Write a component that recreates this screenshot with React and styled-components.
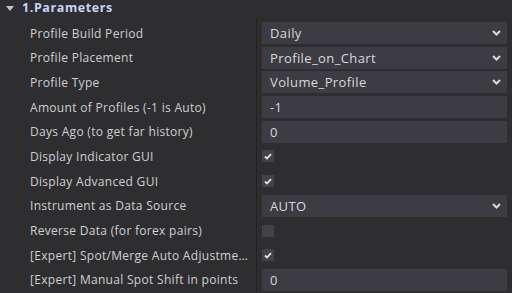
import { Fragment } from "react";
import styled, { createGlobalStyle } from "styled-components";

const Global = createGlobalStyle`
  html, body {
    margin: 0;
    padding: 0;
    background: #2e2e31;
  }
  body {
    font-family: "Open Sans", "Noto Sans", sans-serif;
    font-size: 12px;
    color: #d2d2d4;
  }
`;

const Panel = styled.div`
  width: 512px;
  height: 293px;
  overflow: hidden;
  background: #2e2e31;
`;

const Header = styled.div`
  height: 18px;
  display: flex;
  align-items: center;
  gap: 8px;
  padding-left: 6px;
  box-sizing: border-box;
`;

const Caret = styled.span`
  width: 0;
  height: 0;
  border-left: 4.5px solid transparent;
  border-right: 4.5px solid transparent;
  border-top: 5px solid #c4c4c6;
  margin-top: -2px;
`;

const Title = styled.span`
  font-weight: 700;
  font-size: 12.5px;
  letter-spacing: 0.6px;
  color: #c9d3f6;
  margin-top: -4px;
`;

const Grid = styled.div`
  display: grid;
  grid-template-columns: 256px 1px 250px;
  grid-auto-rows: 22px;
  row-gap: 2.7px;
  padding-top: 4px;
`;

const Divider = styled.div`
  grid-column: 2;
  grid-row: 1 / span 12;
  margin-top: -4px;
  margin-bottom: -20px;
  background: #222224;
`;

const Label = styled.div`
  grid-column: 1;
  display: flex;
  align-items: center;
  padding-left: 30px;
  padding-right: 8px;
  min-width: 0;
  color: #cfcfd1;
  letter-spacing: 0.3px;

  span {
    white-space: nowrap;
    overflow: hidden;
    text-overflow: ellipsis;
  }
`;

const Cell = styled.div`
  grid-column: 3;
  display: flex;
  align-items: center;
  padding-left: 5px;
`;

const Box = styled.div`
  width: 245px;
  height: 22px;
  box-sizing: border-box;
  background: #3d3c42;
  display: flex;
  align-items: center;
  justify-content: space-between;
  padding: 0 6px 0 8px;
  color: #d8d8da;
  font-size: 13px;
  letter-spacing: 0.4px;
`;

const Check = styled.div`
  width: 12px;
  height: 12px;
  background: #434247;
  display: flex;
  align-items: center;
  justify-content: center;
`;

const Chevron = () => (
  <svg width="9" height="6" viewBox="0 0 9 6">
    <path d="M1 1 L4.5 4.5 L8 1" fill="none" stroke="#d8d8da" strokeWidth="2.1" />
  </svg>
);

const Tick = () => (
  <svg width="8" height="7" viewBox="0 0 8 7">
    <path d="M1 3.5 L3 5.5 L7 1.2" fill="none" stroke="#e4e4e6" strokeWidth="1.8" />
  </svg>
);

const params = [
  { label: "Profile Build Period", type: "select", value: "Daily" },
  { label: "Profile Placement", type: "select", value: "Profile_on_Chart" },
  { label: "Profile Type", type: "select", value: "Volume_Profile" },
  { label: "Amount of Profiles (-1 is Auto)", type: "input", value: "-1" },
  { label: "Days Ago (to get far history)", type: "input", value: "0" },
  { label: "Display Indicator GUI", type: "check", value: true },
  { label: "Display Advanced GUI", type: "check", value: true },
  { label: "Instrument as Data Source", type: "select", value: "AUTO" },
  { label: "Reverse Data (for forex pairs)", type: "check", value: false },
  { label: "[Expert] Spot/Merge Auto Adjustment", type: "check", value: true },
  { label: "[Expert] Manual Spot Shift in points", type: "input", value: "0" },
];

function Control({ type, value }) {
  if (type === "check") {
    return <Check>{value && <Tick />}</Check>;
  }
  return (
    <Box>
      <span>{value}</span>
      {type === "select" && <Chevron />}
    </Box>
  );
}

export default function App() {
  return (
    <Panel>
      <Global />
      <Header>
        <Caret />
        <Title>1.Parameters</Title>
      </Header>
      <Grid>
        <Divider />
        {params.map((p) => (
          <Fragment key={p.label}>
            <Label>
              <span>{p.label}</span>
            </Label>
            <Cell>
              <Control type={p.type} value={p.value} />
            </Cell>
          </Fragment>
        ))}
      </Grid>
    </Panel>
  );
}
